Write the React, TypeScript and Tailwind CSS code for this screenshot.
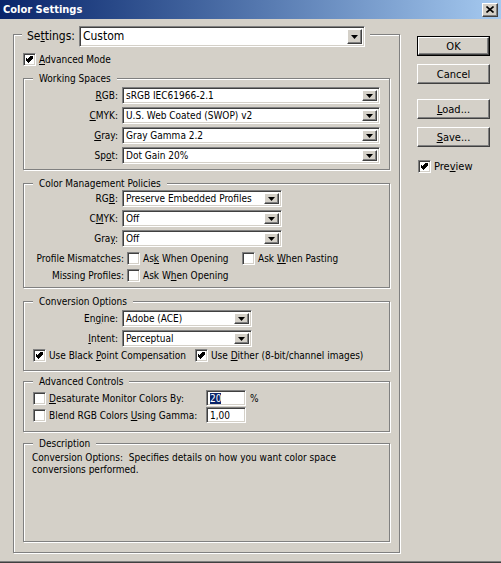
import React from 'react';

const sunken =
  'border border-[#808080] border-r-white border-b-white shadow-[inset_1px_1px_0_#404040,inset_-1px_-1px_0_#d4d0c8]';
const raised =
  'border border-white border-r-[#404040] border-b-[#404040] shadow-[inset_-1px_-1px_0_#808080]';

function Arrow() {
  return (
    <div className={`flex w-[15px] shrink-0 items-center justify-center bg-[#d4d0c8] ${raised}`}>
      <svg width="7" height="4" viewBox="0 0 7 4">
        <path d="M0 0h7L3.5 4z" fill="#000" />
      </svg>
    </div>
  );
}

function Combo({ value, w, big = false }: { value: string; w: string; big?: boolean }) {
  return (
    <div className={`flex bg-white p-[2px] ${sunken} ${w} ${big ? 'h-[21px]' : 'h-[17px]'}`}>
      <span
        className={`flex-1 overflow-hidden whitespace-nowrap pl-[1px] ${
          big ? 'text-[12px] leading-[15px]' : 'leading-[11px]'
        }`}
      >
        {value}
      </span>
      <Arrow />
    </div>
  );
}

function Check({ checked = false }: { checked?: boolean }) {
  return (
    <div className={`flex h-[13px] w-[13px] shrink-0 items-center justify-center bg-white ${sunken}`}>
      {checked && (
        <svg width="7" height="7" viewBox="0 0 7 7" shapeRendering="crispEdges">
          <path
            d="M6 0h1v3h-1v1h-1v1h-1v1h-1v1h-1v-1h-1v-1h-1v-1h-1v-3h1v1h1v1h1v-1h1v-1h1v-1h1z"
            fill="#000"
          />
        </svg>
      )}
    </div>
  );
}

function Group({
  title,
  className,
  children,
}: {
  title: string;
  className: string;
  children?: React.ReactNode;
}) {
  return (
    <div
      className={`relative w-[367px] border border-[#808080] shadow-[1px_1px_0_#fff,inset_1px_1px_0_#fff] ${className}`}
    >
      <span className="absolute left-[9px] top-[-7px] whitespace-nowrap bg-[#d4d0c8] px-[6px] leading-[13px]">
        {title}
      </span>
      {children}
    </div>
  );
}

function Row({ label, children }: { label: React.ReactNode; children: React.ReactNode }) {
  return (
    <div className="flex items-center">
      <span className="w-[94px] whitespace-nowrap text-right leading-[13px]">{label}</span>
      <div className="ml-[4px]">{children}</div>
    </div>
  );
}

function Button({ children, def = false }: { children: React.ReactNode; def?: boolean }) {
  return (
    <div className={`h-[20px] w-[73px] ${def ? 'border border-black' : ''}`}>
      <div className={`flex h-full items-center justify-center bg-[#d4d0c8] text-[11px] leading-[13px] ${raised}`}>
        {children}
      </div>
    </div>
  );
}

export default function App() {
  return (
    <div className="flex h-[563px] w-[501px] flex-col bg-[#d4d0c8] font-['DejaVu_Sans_Condensed','Liberation_Sans',sans-serif] text-[10px] text-black shadow-[inset_0_-1px_0_#404040,inset_0_-2px_0_#808080]">
      {/* title bar */}
      <div className="flex h-[19px] items-center justify-between bg-gradient-to-r from-[#0a246a] to-[#a6caf0] pl-[3px] pr-[3px]">
        <span className="text-[11px] font-bold leading-[14px] text-white">Color Settings</span>
        <div className={`flex h-[14px] w-[16px] items-center justify-center bg-[#d4d0c8] ${raised}`}>
          <svg width="8" height="7" viewBox="0 0 8 7">
            <path d="M0.5 0.5l7 6M7.5 0.5l-7 6" stroke="#000" strokeWidth="1.6" />
          </svg>
        </div>
      </div>

      <div className="flex pl-[13px] pt-[15px]">
        {/* main settings box */}
        <div className="relative flex h-[519px] w-[387px] flex-col border border-[#808080] pl-[9px] pt-[18px] shadow-[1px_1px_0_#fff,inset_1px_1px_0_#fff]">
          <div className="absolute left-[8px] top-[-9px] flex items-center gap-[4px] bg-[#d4d0c8] pl-[5px] pr-[5px]">
            <span className="text-[12px] leading-[15px]">
              Se<u>t</u>tings:
            </span>
            <Combo value="Custom" w="w-[286px]" big />
          </div>

          <div className="flex h-[13px] items-center gap-[3px]">
            <Check checked />
            <span className="leading-[13px]">
              <u>A</u>dvanced Mode
            </span>
          </div>

          <Group title="Working Spaces" className="mt-[12px] h-[92px] pt-[8px]">
            <div className="flex flex-col gap-[3px]">
              <Row label={<><u>R</u>GB:</>}>
                <Combo value="sRGB IEC61966-2.1" w="w-[258px]" />
              </Row>
              <Row label={<><u>C</u>MYK:</>}>
                <Combo value="U.S. Web Coated (SWOP) v2" w="w-[258px]" />
              </Row>
              <Row label={<><u>G</u>ray:</>}>
                <Combo value="Gray Gamma 2.2" w="w-[258px]" />
              </Row>
              <Row label={<>Sp<u>o</u>t:</>}>
                <Combo value="Dot Gain 20%" w="w-[258px]" />
              </Row>
            </div>
          </Group>

          <Group title="Color Management Policies" className="mt-[13px] h-[105px] pt-[6px]">
            <div className="flex flex-col gap-[3px]">
              <Row label={<>RG<u>B</u>:</>}>
                <Combo value="Preserve Embedded Profiles" w="w-[160px]" />
              </Row>
              <Row label={<>C<u>M</u>YK:</>}>
                <Combo value="Off" w="w-[160px]" />
              </Row>
              <Row label={<>Gra<u>y</u>:</>}>
                <Combo value="Off" w="w-[160px]" />
              </Row>
            </div>
            <div className="mt-[5px] flex h-[13px] items-center">
              <span className="w-[100px] whitespace-nowrap text-right leading-[13px]">Profile Mismatches:</span>
              <div className="ml-[3px] flex w-[115px] items-center gap-[3px]">
                <Check />
                <span className="whitespace-nowrap leading-[13px]">
                  As<u>k</u> When Opening
                </span>
              </div>
              <div className="flex items-center gap-[3px]">
                <Check />
                <span className="whitespace-nowrap leading-[13px]">
                  Ask <u>W</u>hen Pasting
                </span>
              </div>
            </div>
            <div className="mt-[4px] flex h-[13px] items-center">
              <span className="w-[100px] whitespace-nowrap text-right leading-[13px]">Missing Profiles:</span>
              <div className="ml-[3px] flex items-center gap-[3px]">
                <Check />
                <span className="whitespace-nowrap leading-[13px]">
                  Ask W<u>h</u>en Opening
                </span>
              </div>
            </div>
          </Group>

          <Group title="Conversion Options" className="mt-[13px] h-[70px] pt-[8px]">
            <div className="flex flex-col gap-[3px]">
              <Row label={<>En<u>g</u>ine:</>}>
                <Combo value="Adobe (ACE)" w="w-[130px]" />
              </Row>
              <Row label={<><u>I</u>ntent:</>}>
                <Combo value="Perceptual" w="w-[130px]" />
              </Row>
            </div>
            <div className="mt-[2px] flex h-[13px] items-center pl-[9px]">
              <div className="flex w-[162px] items-center gap-[3px]">
                <Check checked />
                <span className="whitespace-nowrap leading-[13px]">
                  Use Black <u>P</u>oint Compensation
                </span>
              </div>
              <div className="flex items-center gap-[3px]">
                <Check checked />
                <span className="whitespace-nowrap leading-[13px]">
                  Use <u>D</u>ither (8-bit/channel images)
                </span>
              </div>
            </div>
          </Group>

          <Group title="Advanced Controls" className="mt-[10px] h-[51px] pt-[8px]">
            <div className="flex flex-col gap-[1px] pl-[9px]">
              <div className="flex h-[16px] items-center">
                <div className="flex w-[173px] items-center gap-[3px]">
                  <Check />
                  <span className="whitespace-nowrap leading-[13px]">
                    <u>D</u>esaturate Monitor Colors By:
                  </span>
                </div>
                <div className={`flex h-[16px] w-[40px] items-center bg-white pl-[3px] ${sunken}`}>
                  <span className="bg-[#0a246a] leading-[11px] text-white">20</span>
                </div>
                <span className="ml-[4px] leading-[13px]">%</span>
              </div>
              <div className="flex h-[16px] items-center">
                <div className="flex w-[173px] items-center gap-[3px]">
                  <Check />
                  <span className="whitespace-nowrap leading-[13px]">
                    Blend RGB Colors <u>U</u>sing Gamma:
                  </span>
                </div>
                <div className={`flex h-[16px] w-[40px] items-center bg-white pl-[3px] ${sunken}`}>
                  <span className="leading-[11px]">1,00</span>
                </div>
              </div>
            </div>
          </Group>

          <Group title="Description" className="mt-[11px] h-[99px] px-[8px] pt-[8px]">
            <p className="leading-[12px]">
              Conversion Options:&nbsp; Specifies details on how you want color space
              <br />
              conversions performed.
            </p>
          </Group>
        </div>

        {/* buttons */}
        <div className="ml-[17px] flex flex-col pt-[2px]">
          <Button def>OK</Button>
          <div className="mt-[8px]">
            <Button>Cancel</Button>
          </div>
          <div className="mt-[15px]">
            <Button>
              <span>
                <u>L</u>oad...
              </span>
            </Button>
          </div>
          <div className="mt-[8px]">
            <Button>
              <span>
                <u>S</u>ave...
              </span>
            </Button>
          </div>
          <div className="mt-[13px] flex items-center gap-[3px] pl-[1px]">
            <Check checked />
            <span className="text-[11px] leading-[13px]">
              Pre<u>v</u>iew
            </span>
          </div>
        </div>
      </div>
    </div>
  );
}
